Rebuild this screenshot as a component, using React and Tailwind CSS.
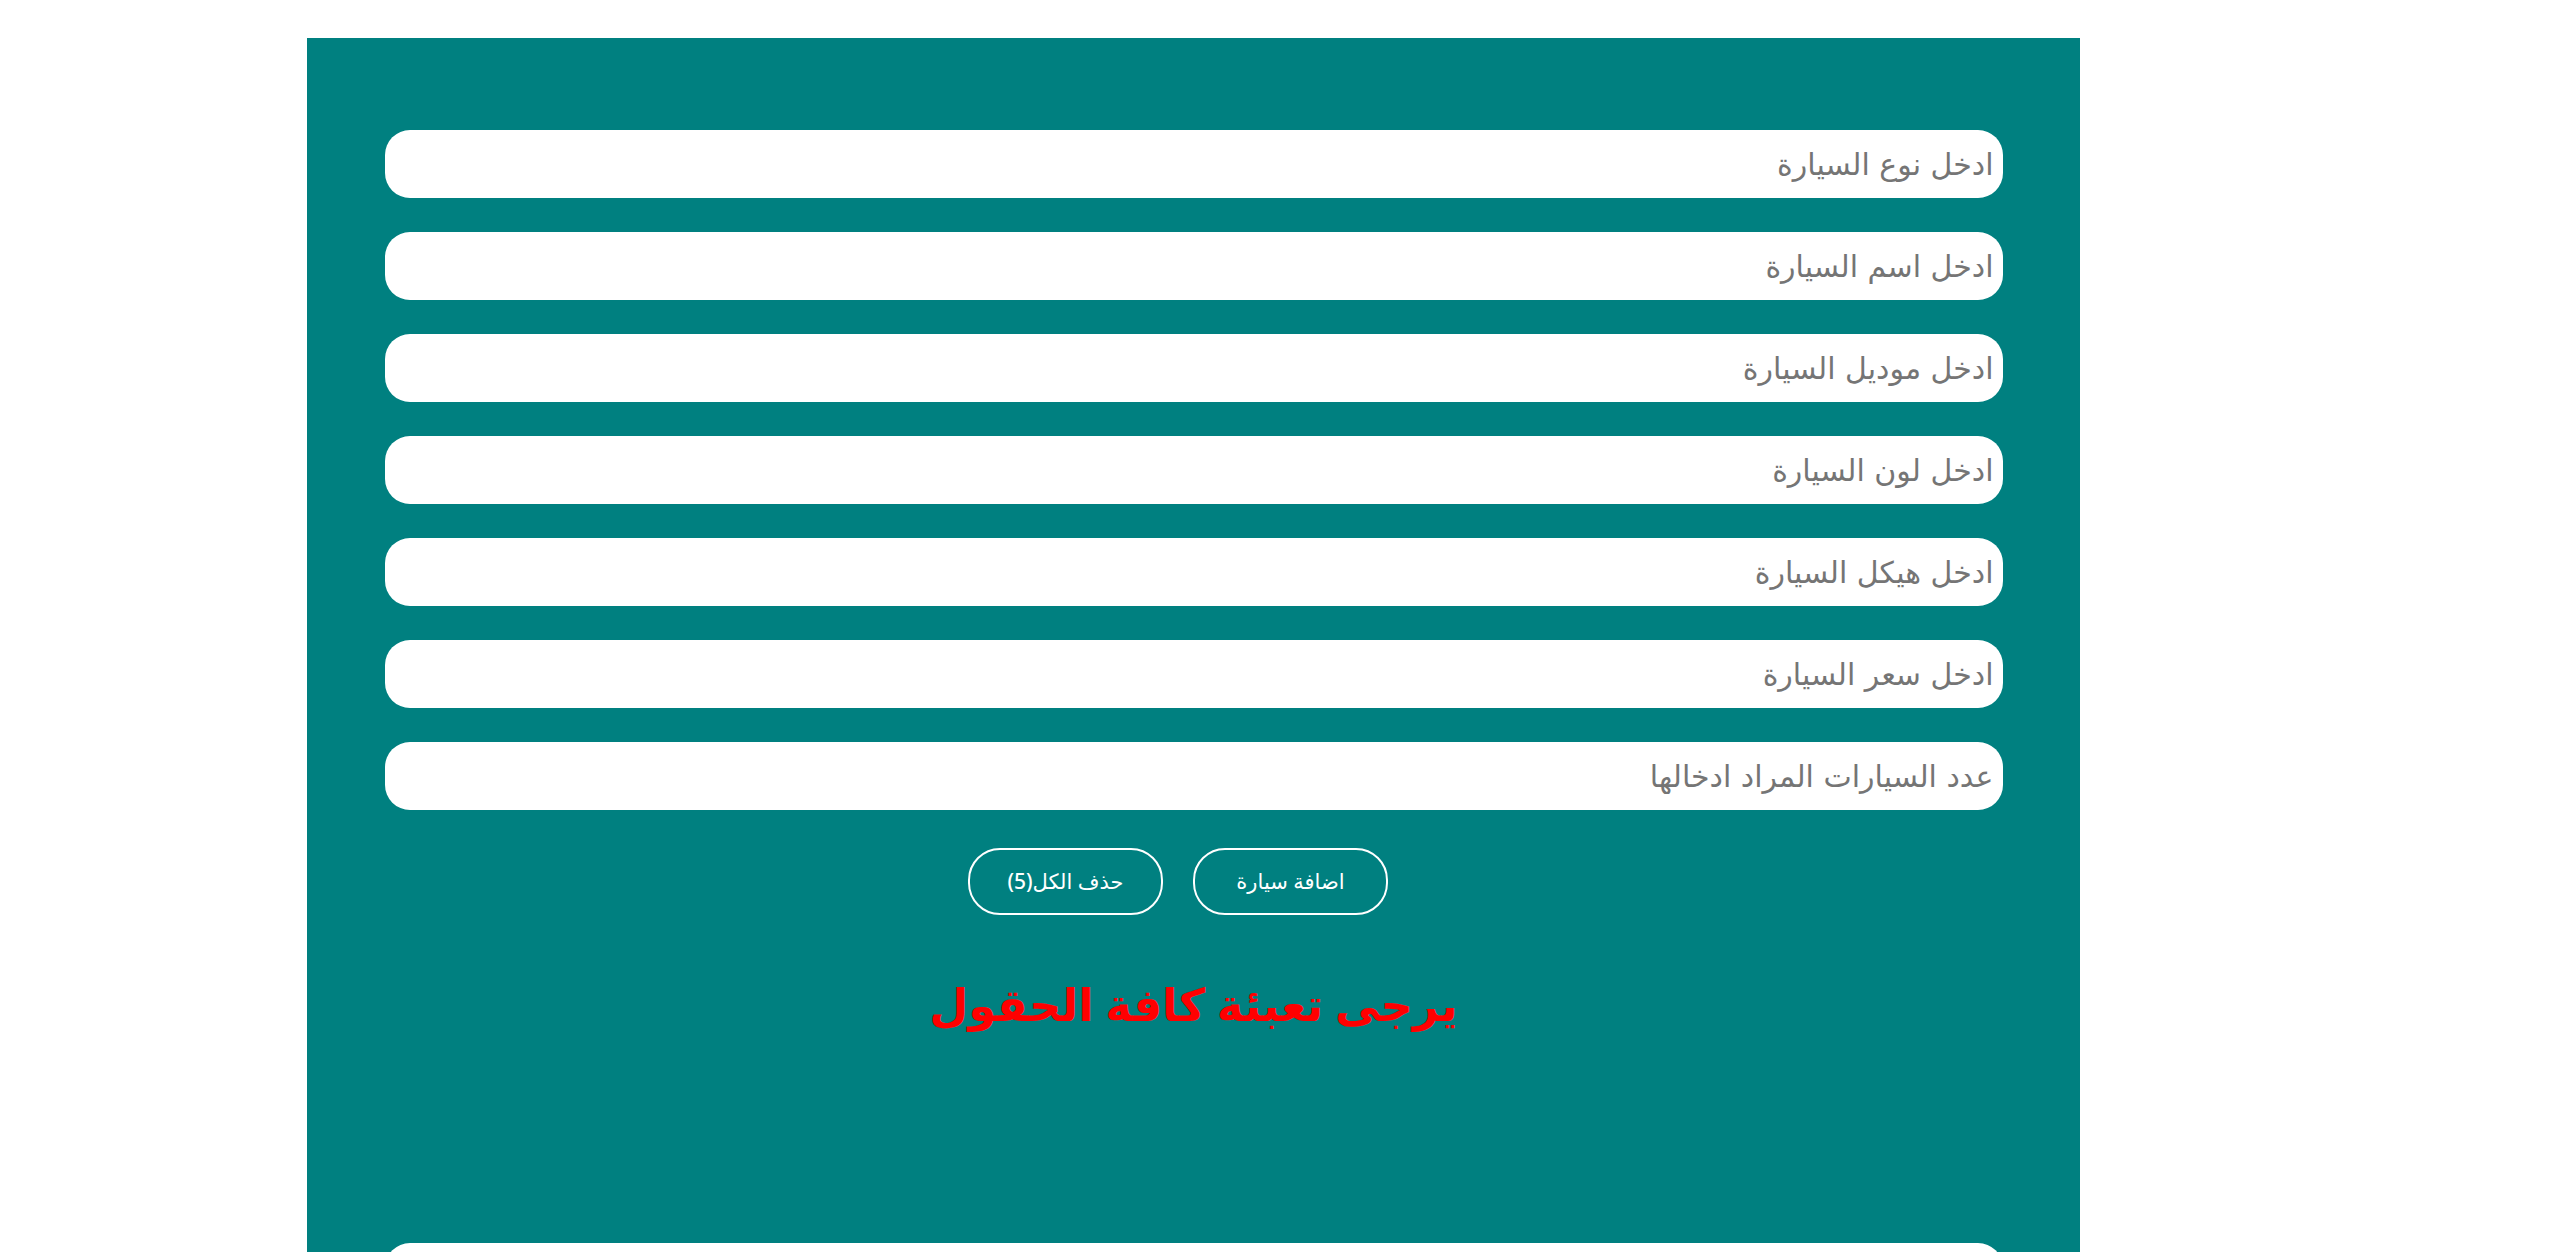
import React, { useState } from 'react';

const fields = [
  'ادخل نوع السيارة',
  'ادخل اسم السيارة',
  'ادخل موديل السيارة',
  'ادخل لون السيارة',
  'ادخل هيكل السيارة',
  'ادخل سعر السيارة',
  'عدد السيارات المراد ادخالها',
];

export default function App() {
  const [values, setValues] = useState(fields.map(() => ''));

  return (
    <div className="h-screen overflow-y-scroll bg-white font-['DejaVu_Sans',sans-serif]">
      <div className="pt-[38px] pb-[200px]">
        <div className="ml-[307px] w-[1773px] bg-[#008080] pt-[92px] pb-[120px]">
          <div dir="rtl" className="flex flex-col items-center gap-[34px]">
            {fields.map((f, i) => (
              <input
                key={i}
                type="text"
                value={values[i]}
                onChange={(e) => setValues(values.map((v, j) => (j === i ? e.target.value : v)))}
                placeholder={f}
                className="w-[1618px] h-[68px] rounded-[25px] bg-white px-[9px] text-[30px] text-gray-800 placeholder:text-[#757575] outline-none border-0"
              />
            ))}
          </div>

          {/* buttons */}
          <div dir="rtl" className="flex justify-center gap-[30px] mt-[38px] pr-[31px] font-['Noto_Sans','DejaVu_Sans',sans-serif]">
            <button className="w-[195px] h-[67px] rounded-[32px] border-2 border-white text-white text-[21px] font-medium">
              اضافة سيارة
            </button>
            <button className="w-[195px] h-[67px] rounded-[32px] border-2 border-white text-white text-[21px] font-medium">
              حذف الكل(5)
            </button>
          </div>

          <p dir="rtl" className="mt-[62px] text-center text-[45px] font-bold text-[#ff0000] leading-[1.2] font-['Noto_Sans','DejaVu_Sans',sans-serif]">
            يرجى تعبئة كافة الحقول
          </p>

          <div className="mt-[212px] mx-auto w-[1618px] h-[420px] bg-white rounded-[25px]"></div>
        </div>
      </div>
    </div>
  );
}
